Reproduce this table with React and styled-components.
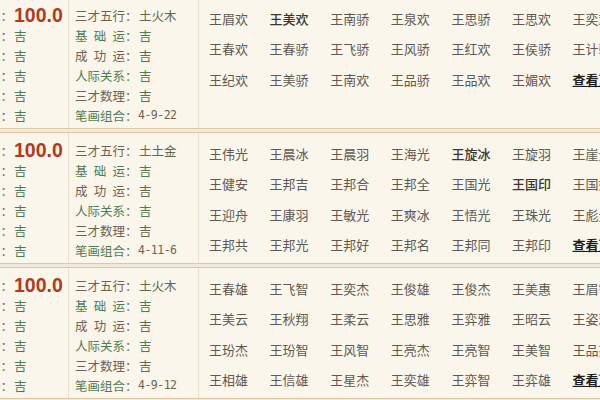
import React from "react";
import styled, { createGlobalStyle } from "styled-components";

const Global = createGlobalStyle`
  html, body { margin: 0; padding: 0; }
  body {
    background: #f2ead8;
    overflow: hidden;
    width: 600px;
    height: 400px;
    font-family: "Noto Sans CJK SC", "Noto Sans", sans-serif;
  }
`;

const Board = styled.div`
  margin-top: -3px;
  margin-left: -64px;
  width: 760px;
  display: flex;
  flex-direction: column;
  gap: 3px;
`;

const Card = styled.section`
  display: grid;
  grid-template-columns: 132px 130px 1fr;
  height: 130px;
  background: #faf6ec;
  border: 1px solid #d9c9a6;
  overflow: hidden;
`;

const LeftCol = styled.div`
  padding-top: 7px;
  border-right: 1px solid #e8dfcb;
`;

const LeftRow = styled.div`
  display: flex;
  align-items: center;
  height: 20px;
  font-size: 12.5px;
`;

const LeftLabel = styled.span`
  flex: 0 0 76px;
  text-align: right;
  color: #6d6250;
  white-space: nowrap;
`;

const Good = styled.span`
  color: ${(p) => p.$c || "#4e7a52"};
  padding-left: 1px;
`;

const Score = styled.span`
  font-family: "Liberation Sans", Arial, sans-serif;
  font-weight: bold;
  font-size: 19.5px;
  color: #b23a1c;
  padding-left: 1px;
`;

const MidCol = styled.div`
  padding-top: 7px;
  padding-left: 6px;
  border-right: 1px solid #e8dfcb;
`;

const MidRow = styled.div`
  display: flex;
  align-items: center;
  height: 20px;
  font-size: 12.5px;
  color: ${(p) => (p.$green ? "#4f7d52" : "#6e6250")};
  white-space: nowrap;
`;

const MidLabel = styled.span`
  display: inline-block;
  width: 50px;
  text-align: justify;
  text-align-last: justify;
`;

const Colon = styled.span`
  display: inline-block;
  width: 13px;
`;

const Num = styled.span`
  font-family: "DejaVu Sans Mono", "Liberation Mono", monospace;
  font-size: 11.5px;
  letter-spacing: -0.5px;
  color: #6e6250;
`;

const Names = styled.div`
  padding: 5px 0 0 10px;
  display: grid;
  grid-template-columns: repeat(7, 60.6px);
  grid-auto-rows: 30.5px;
  align-items: center;
  font-size: 13px;
`;

const Name = styled.span`
  color: ${(p) => (p.$strong ? "#3a362e" : "#5e5a52")};
  font-weight: ${(p) => (p.$strong ? 500 : 400)};
  white-space: nowrap;
`;

const More = styled.a`
  color: #1e1e1e;
  font-weight: bold;
  text-decoration: underline;
  white-space: nowrap;
`;

const leftLabels = ["名字评分", "天格", "人格", "地格", "外格", "总格"];

const cards = [
  {
    wx: "土火木",
    bh: "4-9-22",
    names: [
      ["王眉欢", "王美欢*", "王南骄", "王泉欢", "王思骄", "王思欢", "王奕欢"],
      ["王春欢", "王春骄", "王飞骄", "王风骄", "王红欢", "王侯骄", "王计骄"],
      ["王纪欢", "王美骄", "王南欢", "王品骄", "王品欢", "王媚欢", "MORE"],
    ],
  },
  {
    wx: "土土金",
    bh: "4-11-6",
    names: [
      ["王伟光", "王晨冰", "王晨羽", "王海光", "王旋冰*", "王旋羽", "王崖光"],
      ["王健安", "王邦吉", "王邦合", "王邦全", "王国光", "王国印*", "王国娟"],
      ["王迎舟", "王康羽", "王敏光", "王爽冰", "王悟光", "王珠光", "王彪光"],
      ["王邦共", "王邦光", "王邦好", "王邦名", "王邦同", "王邦印", "MORE"],
    ],
  },
  {
    wx: "土火木",
    bh: "4-9-12",
    names: [
      ["王春雄", "王飞智", "王奕杰", "王俊雄", "王俊杰", "王美惠", "王眉智"],
      ["王美云", "王秋翔", "王柔云", "王思雅", "王弈雅", "王昭云", "王姿雅"],
      ["王玢杰", "王玢智", "王风智", "王亮杰", "王亮智", "王美智", "王品杰"],
      ["王相雄", "王信雄", "王星杰", "王奕雄", "王弈智", "王弈雄", "MORE"],
    ],
  },
];

const midRows = (c) => [
  { label: "三才五行", value: c.wx, green: false },
  { label: "基础运", value: "吉", green: true },
  { label: "成功运", value: "吉", green: false },
  { label: "人际关系", value: "吉", green: true },
  { label: "三才数理", value: "吉", green: false },
  { label: "笔画组合", value: c.bh, green: true, num: true },
];

export default function App() {
  return (
    <>
      <Global />
      <Board>
        {cards.map((c, i) => (
          <Card key={i}>
            <LeftCol>
              {leftLabels.map((l, j) => (
                <LeftRow key={j}>
                  <LeftLabel>{l}：</LeftLabel>
                  {j === 0 ? <Score>100.0</Score> : <Good>吉</Good>}
                </LeftRow>
              ))}
            </LeftCol>
            <MidCol>
              {midRows(c).map((r, j) => (
                <MidRow key={j} $green={r.green}>
                  <MidLabel>{r.label}</MidLabel>
                  <Colon>：</Colon>
                  {r.num ? (
                    <Num>{r.value}</Num>
                  ) : (
                    <Good $c={r.green ? "#4f7d52" : "#5f6a4c"}>{r.value}</Good>
                  )}
                </MidRow>
              ))}
            </MidCol>
            <Names>
              {c.names.flat().map((n, j) =>
                n === "MORE" ? (
                  <More key={j} href="#">查看更多</More>
                ) : (
                  <Name key={j} $strong={n.endsWith("*")}>
                    {n.replace("*", "")}
                  </Name>
                )
              )}
            </Names>
          </Card>
        ))}
      </Board>
    </>
  );
}
